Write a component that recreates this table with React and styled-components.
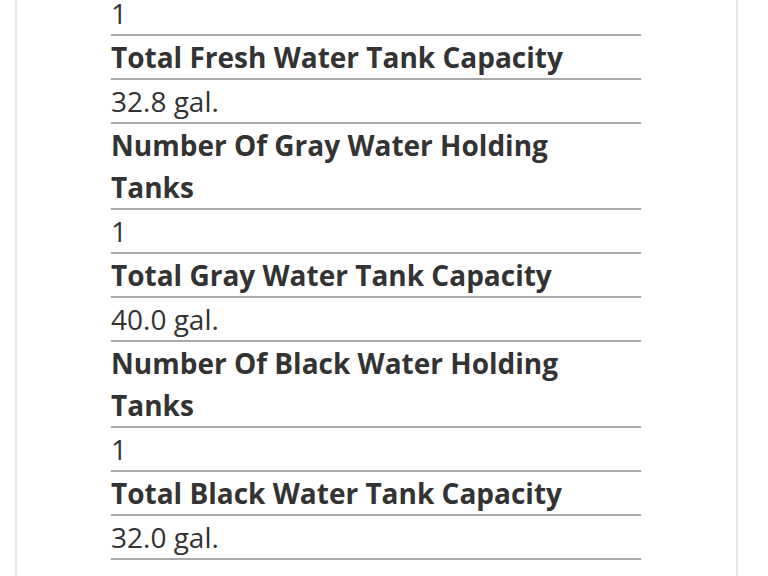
import styled, { createGlobalStyle } from 'styled-components'

const specs = [
  { value: '1' },
  { label: 'Total Fresh Water Tank Capacity', value: '32.8 gal.' },
  { label: 'Number Of Gray Water Holding Tanks', value: '1' },
  { label: 'Total Gray Water Tank Capacity', value: '40.0 gal.' },
  { label: 'Number Of Black Water Holding Tanks', value: '1' },
  { label: 'Total Black Water Tank Capacity', value: '32.0 gal.' },
]

function App() {
  return (
    <>
      <GlobalStyle />
      <Card>
        <SpecList>
          {specs.map((spec, i) => (
            <Spec key={i}>
              {spec.label && <Label>{spec.label}</Label>}
              <Value>{spec.value}</Value>
            </Spec>
          ))}
        </SpecList>
      </Card>
    </>
  )
}

const GlobalStyle = createGlobalStyle`
  html, body {
    margin: 0;
    background: #fff;
    overflow: hidden;
  }
  body {
    font-family: "Open Sans", "Noto Sans", sans-serif;
    color: #333;
  }
`

const Card = styled.div`
  margin-left: 15px;
  width: 530px;
  min-height: 600px;
  border-left: 2px solid #e6e6e6;
  border-right: 2px solid #e6e6e6;
  padding: 0 95px 0 94px;
`

const SpecList = styled.dl`
  margin: -8px 0 0;
  padding: 0;
`

const Spec = styled.div`
  display: flex;
  flex-direction: column;
`

const Label = styled.dt`
  padding-right: 16px;
  font-size: 28px;
  line-height: 42px;
  font-weight: 700;
  border-bottom: 2px solid #a9a9a9;
`

const Value = styled.dd`
  margin: 0;
  font-size: 28px;
  line-height: 42px;
  font-weight: 400;
  border-bottom: 2px solid #a9a9a9;
`

export default App
